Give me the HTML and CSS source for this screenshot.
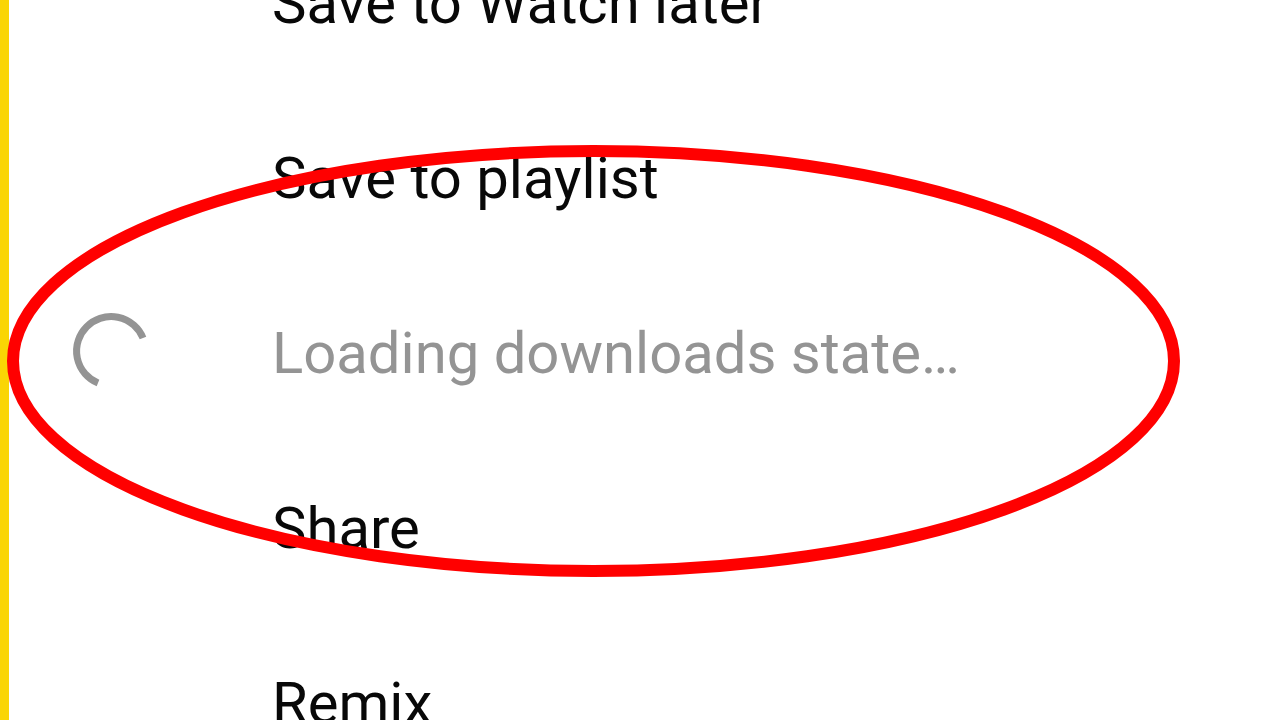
FILE: index.html
```html
<!DOCTYPE html>
<html lang="en">
<head>
<meta charset="utf-8">
<meta name="viewport" content="width=device-width, initial-scale=1">
<title>Video options</title>
<link rel="stylesheet" href="styles.css">
</head>
<body>
<main class="sheet">
  <div class="edge"></div>
  <div class="menu">
    <button class="item" type="button"><span class="icon"></span><span>Save to Watch later</span></button>
    <button class="item" type="button"><span class="icon"></span><span>Save to playlist</span></button>
    <button class="item loading" type="button" disabled>
      <span class="icon"><svg class="spinner" viewBox="0 0 76 76" aria-hidden="true"><path d="M70 25A34.500 34.500 0 1 0 25 70"/></svg></span>
      <span>Loading downloads state…</span>
    </button>
    <button class="item" type="button"><span class="icon"></span><span>Share</span></button>
    <button class="item" type="button"><span class="icon"></span><span>Remix</span></button>
  </div>
  <svg class="highlight" viewBox="0 0 1280 720" aria-hidden="true"><ellipse cx="593.500" cy="361" rx="580.500" ry="210"/></svg>
</main>
</body>
</html>
```
FILE: styles.css
```css
* { box-sizing: border-box; }
body { margin: 0; background: #fff; font-family: Roboto, "Liberation Sans", sans-serif; }
.sheet { position: relative; display: flex; height: 100vh; overflow: hidden; }
.edge { flex: none; width: 9px; background: #fad504; }
.menu { display: flex; flex: 1; flex-direction: column; margin-top: -85px; }
.item { display: flex; align-items: center; flex: none; height: 175px; padding: 0 64px; border: 0; background: none; color: #080808; font: inherit; font-size: 58px; font-weight: 430; line-height: 68px; text-align: left; white-space: nowrap; }
.icon { display: flex; flex: none; width: 199px; padding-bottom: 4px; }
.loading { color: #949494; }
.spinner { width: 76px; height: 76px; overflow: visible; fill: none; stroke: #949494; stroke-width: 7px; }
.highlight { position: absolute; top: 0; left: 0; width: 100%; pointer-events: none; fill: none; stroke: #f00; stroke-width: 12px; }
```
